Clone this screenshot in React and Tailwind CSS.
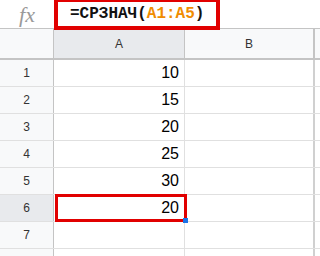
import React from "react";

const rows = [
  { n: 1, v: "10" },
  { n: 2, v: "15" },
  { n: 3, v: "20" },
  { n: 4, v: "25" },
  { n: 5, v: "30" },
  { n: 6, v: "20", sel: true },
  { n: 7, v: "" },
  { n: "", v: "" },
];

export default function App() {
  return (
    <div className="w-[320px] h-[256px] overflow-hidden bg-white relative" style={{ fontFamily: '"Liberation Sans", Arial, sans-serif' }}>
      {/* formula bar */}
      <div className="flex h-[29px] border-b border-[#c4c4c4] relative">
        <div className="w-[54px] flex items-center justify-center text-[22px] italic text-[#9a9a9a]" style={{ fontFamily: '"Liberation Serif", serif' }}>
          fx
        </div>
        <div className="absolute left-[54px] top-[-2px] w-[166px] h-[32px] border-4 border-[#e10000] flex items-center pl-[12px] text-[16px] font-bold text-[#111] z-10" style={{ fontFamily: '"Liberation Mono", "Courier New", monospace' }}>
          <span>=СРЗНАЧ(</span>
          <span className="text-[#f08c00]">A1:A5</span>
          <span>)</span>
        </div>
      </div>
      {/* header row */}
      <div className="grid grid-cols-[54px_131px_130px_5px] h-[31px] border-b-2 border-[#c4c4c4] text-[12px] text-[#333]">
        <div className="bg-[#f8f9fa] border-r border-[#c4c4c4]"></div>
        <div className="bg-[#e8eaed] border-r border-[#c4c4c4] flex items-center justify-center">A</div>
        <div className="bg-[#f8f9fa] border-r-2 border-[#c4c4c4] flex items-center justify-center">B</div>
        <div className="bg-[#f8f9fa]"></div>
      </div>
      {rows.map((r, i) => (
        <div key={i} className="grid grid-cols-[54px_131px_130px_5px] h-[27px] border-b border-[#e0e0e0] relative">
          <div className={`${r.sel ? "bg-[#e8eaed]" : "bg-[#f8f9fa]"} border-r border-[#c4c4c4] flex items-center justify-center text-[12px] text-[#333]`}>
            {r.n}
          </div>
          <div className="border-r border-[#e0e0e0] flex items-center justify-end pr-[5px] text-[16px] text-black">
            {r.v}
          </div>
          <div className="border-r-2 border-[#d0d0d0]"></div>
          <div></div>
          {r.sel && (
            <>
              <div className="absolute left-[55px] top-[-1px] w-[132px] h-[28px] border-[3px] border-[#e10000]"></div>
              <div className="absolute left-[183px] top-[23px] w-[5px] h-[5px] bg-[#1a73e8] z-10"></div>
            </>
          )}
        </div>
      ))}
    </div>
  );
}
